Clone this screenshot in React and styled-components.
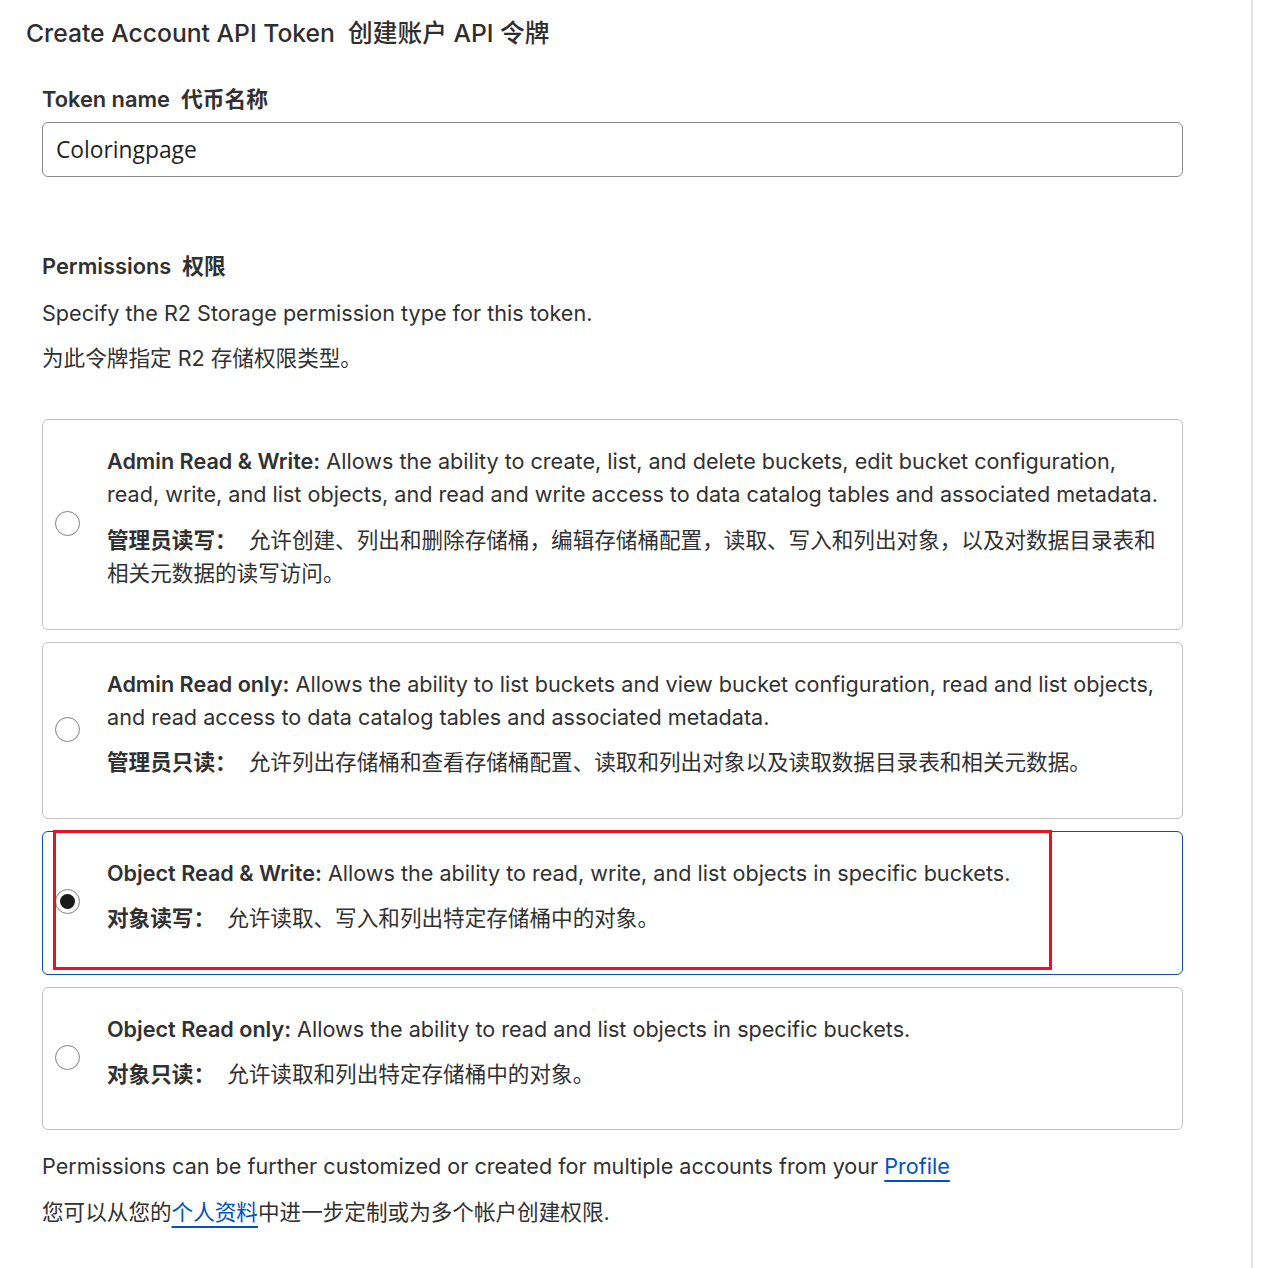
import React from 'react'
import styled, { createGlobalStyle } from 'styled-components'

const GlobalStyle = createGlobalStyle`
  body {
    margin: 0;
    background: #fff;
    font-family: Inter, "Noto Sans CJK SC", sans-serif;
    color: #313131;
  }
`

const options = [
  {
    id: 'admin-rw',
    title: 'Admin Read & Write:',
    text: 'Allows the ability to create, list, and delete buckets, edit bucket configuration, read, write, and list objects, and read and write access to data catalog tables and associated metadata.',
    zhTitle: '管理员读写：',
    zhText: '允许创建、列出和删除存储桶，编辑存储桶配置，读取、写入和列出对象，以及对数据目录表和相关元数据的读写访问。',
  },
  {
    id: 'admin-ro',
    title: 'Admin Read only:',
    text: 'Allows the ability to list buckets and view bucket configuration, read and list objects, and read access to data catalog tables and associated metadata.',
    zhTitle: '管理员只读：',
    zhText: '允许列出存储桶和查看存储桶配置、读取和列出对象以及读取数据目录表和相关元数据。',
  },
  {
    id: 'object-rw',
    title: 'Object Read & Write:',
    text: 'Allows the ability to read, write, and list objects in specific buckets.',
    zhTitle: '对象读写：',
    zhText: '允许读取、写入和列出特定存储桶中的对象。',
    checked: true,
    marked: true,
  },
  {
    id: 'object-ro',
    title: 'Object Read only:',
    text: 'Allows the ability to read and list objects in specific buckets.',
    zhTitle: '对象只读：',
    zhText: '允许读取和列出特定存储桶中的对象。',
  },
]

const App = () => {
  return (
    <Page>
      <GlobalStyle />
      <Title>Create Account API Token&nbsp; 创建账户 API 令牌</Title>
      <Section $top={32}>
        <Label>Token name&nbsp; 代币名称</Label>
        <Input defaultValue="Coloringpage" />
      </Section>

      <Section $top={74}>
        <Label>Permissions&nbsp; 权限</Label>
        <Desc $first>Specify the R2 Storage permission type for this token.</Desc>
        <Desc>为此令牌指定 R2 存储权限类型。</Desc>
      </Section>

      <Cards>
        {options.map(o => (
          <Card key={o.id} $active={o.checked}>
            <Radio $checked={o.checked} />
            <CardBody>
              <Para><b>{o.title}</b> {o.text}</Para>
              <Para><b>{o.zhTitle}</b>&nbsp; {o.zhText}</Para>
            </CardBody>
            {o.marked && <Mark />}
          </Card>
        ))}
      </Cards>

      <Footer>
        <Desc>Permissions can be further customized or created for multiple accounts from your <Link>Profile</Link></Desc>
        <Desc $gap={19}>您可以从您的<Link>个人资料</Link>中进一步定制或为多个帐户创建权限.</Desc>
      </Footer>
    </Page>
  )
}

export default App

const Page = styled.div`
  width: 1253px;
  min-height: 1268px;
  box-sizing: border-box;
  border-right: 2px solid #e4e4e4;
  padding: 14px 0 0 26px;
`

const Title = styled.h1`
  margin: 0;
  font-size: 24.7px;
  font-weight: 500;
  line-height: 38px;
  color: #2e2e2e;
`

const Section = styled.div`
  margin-top: ${p => p.$top || 26}px;
  padding-left: 16px;
`

const Label = styled.div`
  font-size: 21.8px;
  font-weight: 600;
  line-height: 30px;
  margin-bottom: 8px;
`

const Input = styled.input`
  display: block;
  width: 1141px;
  height: 55px;
  box-sizing: border-box;
  border: 1px solid #8a8a8a;
  border-radius: 6px;
  padding: 0 13px;
  font-family: "Open Sans", "Noto Sans CJK SC", sans-serif;
  font-size: 22.8px;
  color: #1f1f1f;
  outline: none;
`

const Desc = styled.p`
  margin: ${p => p.$gap || (p.$first ? 19 : 18)}px 0 0;
  font-size: 21.6px;
  line-height: 27px;
  color: #313131;
`

const Cards = styled.div`
  display: flex;
  flex-direction: column;
  gap: 12px;
  margin: 47px 0 0 16px;
  width: 1141px;
`

const Card = styled.label`
  position: relative;
  display: flex;
  align-items: center;
  box-sizing: border-box;
  border: 1px solid ${p => (p.$active ? '#0a4db8' : '#c2c2c2')};
  border-radius: 6px;
  padding: 25px 17px 25px 12px;
`

const Radio = styled.span`
  flex: none;
  width: 25px;
  height: 25px;
  box-sizing: border-box;
  border-radius: 50%;
  border: 1px solid #808080;
  background: #fff;
  margin: 0 27px 2px 0;
  display: flex;
  align-items: center;
  justify-content: center;
  &::after {
    content: '';
    display: ${p => (p.$checked ? 'block' : 'none')};
    width: 15px;
    height: 15px;
    border-radius: 50%;
    background: #1a1a1a;
  }
`

const CardBody = styled.div`
  flex: 1;
  padding-bottom: 13px;
`

const Para = styled.p`
  margin: 0 0 12px;
  font-size: 21.6px;
  line-height: 33.4px;
  color: #313131;
  &:last-child {
    margin-bottom: 0;
  }
  b {
    font-weight: 600;
  }
`

const Mark = styled.span`
  position: absolute;
  left: 10px;
  top: -2px;
  width: 999px;
  height: 140px;
  box-sizing: border-box;
  border: 3px solid #e8131f;
  pointer-events: none;
`

const Footer = styled.div`
  padding: 5px 0 0 16px;
`

const Link = styled.a`
  color: #0051c3;
  text-decoration: underline;
  text-decoration-thickness: 2px;
  text-underline-offset: 6px;
  cursor: pointer;
`
